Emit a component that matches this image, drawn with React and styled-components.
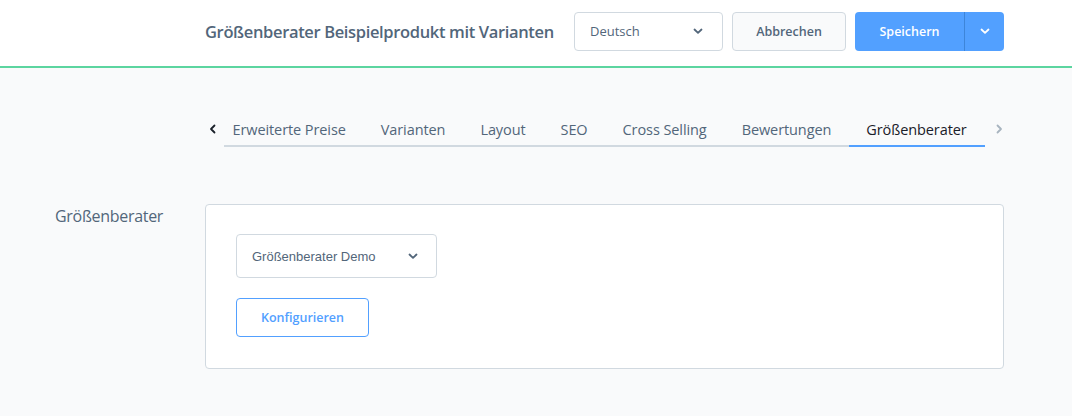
import styled, { createGlobalStyle } from "styled-components";

const GlobalStyle = createGlobalStyle`
  html, body {
    margin: 0;
    padding: 0;
    background: #f9fafb;
  }
  body {
    font-family: "Open Sans", "Noto Sans", sans-serif;
    color: #52667a;
  }
`;

const Page = styled.div`
  width: 1072px;
  height: 416px;
  background: #f9fafb;
  overflow: hidden;
`;

const SmartBar = styled.header`
  height: 68px;
  box-sizing: border-box;
  background: #fff;
  border-bottom: 2px solid #5cd5a0;
  display: flex;
  align-items: center;
  padding: 0 68px 4px 205px;
  gap: 9px;
`;

const Title = styled.h1`
  flex: 1;
  margin: 0;
  font-size: 16.5px;
  font-weight: 600;
  color: #52667a;
  letter-spacing: -0.35px;
`;

const LangSelect = styled.div`
  width: 149px;
  height: 39px;
  box-sizing: border-box;
  border: 1px solid #d1d9e0;
  border-radius: 4px;
  background: #fff;
  display: flex;
  align-items: center;
  justify-content: space-between;
  padding: 0 18px 0 15px;
  font-size: 13px;
  color: #52667a;
`;

const Button = styled.button`
  height: 39px;
  box-sizing: border-box;
  border-radius: 4px;
  font-family: "Open Sans", sans-serif;
  font-size: 12.5px;
  font-weight: 600;
  display: flex;
  align-items: center;
  justify-content: center;
  cursor: pointer;
  padding: 0;
  width: ${(p) => p.$w}px;
  background: ${(p) => (p.$outline ? "#fff" : "#f9fafb")};
  border: 1px solid ${(p) => (p.$outline ? "#52a0ff" : "#d1d9e0")};
  color: ${(p) => (p.$outline ? "#52a0ff" : "#52667a")};
`;

const SplitButton = styled.div`
  display: flex;
  height: 39px;
  border-radius: 4px;
  overflow: hidden;
  background: #52a0ff;
`;

const SplitMain = styled.span`
  width: 109px;
  display: flex;
  align-items: center;
  justify-content: center;
  color: #fff;
  font-size: 12.5px;
  font-weight: 600;
  border-right: 1px solid #3d85d9;
`;

const SplitToggle = styled.span`
  width: 39px;
  display: flex;
  align-items: center;
  justify-content: center;
`;

const Content = styled.main`
  padding: 46px 68px 0 55px;
`;

const TabsRow = styled.div`
  display: flex;
  align-items: flex-start;
  margin-left: 150px;
  height: 34px;
`;

const Arrow = styled.span`
  width: 20px;
  height: 30px;
  box-sizing: border-box;
  display: flex;
  align-items: center;
  justify-content: ${(p) => (p.$right ? "flex-end" : "flex-start")};
  padding-left: ${(p) => (p.$right ? "0" : "3px")};
`;

const TabList = styled.nav`
  display: flex;
  border-bottom: 2px solid #d1d9e0;
  height: 31px;
`;

const Tab = styled.div`
  padding: 0 18px 0 ${(p) => (p.$first ? 8 : 17)}px;
  font-size: 14.5px;
  color: ${(p) => (p.$active ? "#1a2029" : "#52667a")};
  border-bottom: 2px solid ${(p) => (p.$active ? "#52a0ff" : "transparent")};
  margin-bottom: -2px;
  height: 31px;
  display: flex;
  align-items: center;
  letter-spacing: -0.09px;
  white-space: nowrap;
`;

const FieldRow = styled.section`
  display: flex;
  margin-top: 56px;
`;

const FieldLabel = styled.div`
  width: 150px;
  font-size: 16px;
  color: #52667a;
  padding-top: 1px;
  letter-spacing: -0.3px;
`;

const Card = styled.div`
  flex: 1;
  height: 165px;
  box-sizing: border-box;
  background: #fff;
  border: 1px solid #d1d9e0;
  border-radius: 4px;
  padding: 29px 30px;
  display: flex;
  flex-direction: column;
  gap: 20px;
`;

const DemoSelect = styled.div`
  width: 201px;
  height: 44px;
  box-sizing: border-box;
  border: 1px solid #d1d9e0;
  border-radius: 4px;
  display: flex;
  align-items: center;
  justify-content: space-between;
  padding: 0 17px 0 15px;
  font-family: "Liberation Sans", Arial, sans-serif;
  font-size: 13px;
  color: #52667a;
`;

const Chevron = ({ color = "#52667a", size = 12 }) => (
  <svg width={size} height={size} viewBox="0 0 12 12" fill="none">
    <path d="M2.5 4.5 L6 7.8 L9.5 4.5" stroke={color} strokeWidth="1.8" strokeLinecap="round" strokeLinejoin="round" />
  </svg>
);

const ArrowIcon = ({ dir, color }) => (
  <svg width="10" height="12" viewBox="0 0 10 12" fill="none">
    <path
      d={dir === "left" ? "M6.5 2.5 L3 6 L6.5 9.5" : "M3.5 2.5 L7 6 L3.5 9.5"}
      stroke={color}
      strokeWidth="1.8"
      strokeLinecap="round"
      strokeLinejoin="round"
    />
  </svg>
);

const tabs = [
  { label: "Erweiterte Preise", first: true },
  { label: "Varianten" },
  { label: "Layout" },
  { label: "SEO" },
  { label: "Cross Selling" },
  { label: "Bewertungen" },
  { label: "Größenberater", active: true },
];

export default function App() {
  return (
    <Page>
      <GlobalStyle />
      <SmartBar>
        <Title>Größenberater Beispielprodukt mit Varianten</Title>
        <LangSelect>
          Deutsch
          <Chevron />
        </LangSelect>
        <Button $w={114}>Abbrechen</Button>
        <SplitButton>
          <SplitMain>Speichern</SplitMain>
          <SplitToggle>
            <Chevron color="#fff" />
          </SplitToggle>
        </SplitButton>
      </SmartBar>
      <Content>
        <TabsRow>
          <Arrow>
            <ArrowIcon dir="left" color="#1a2029" />
          </Arrow>
          <TabList>
            {tabs.map((t) => (
              <Tab key={t.label} $active={t.active} $first={t.first}>
                {t.label}
              </Tab>
            ))}
          </TabList>
          <Arrow $right>
            <ArrowIcon dir="right" color="#a8b4bf" />
          </Arrow>
        </TabsRow>
        <FieldRow>
          <FieldLabel>Größenberater</FieldLabel>
          <Card>
            <DemoSelect>
              Größenberater Demo
              <Chevron />
            </DemoSelect>
            <Button $outline $w={133}>Konfigurieren</Button>
          </Card>
        </FieldRow>
      </Content>
    </Page>
  );
}
